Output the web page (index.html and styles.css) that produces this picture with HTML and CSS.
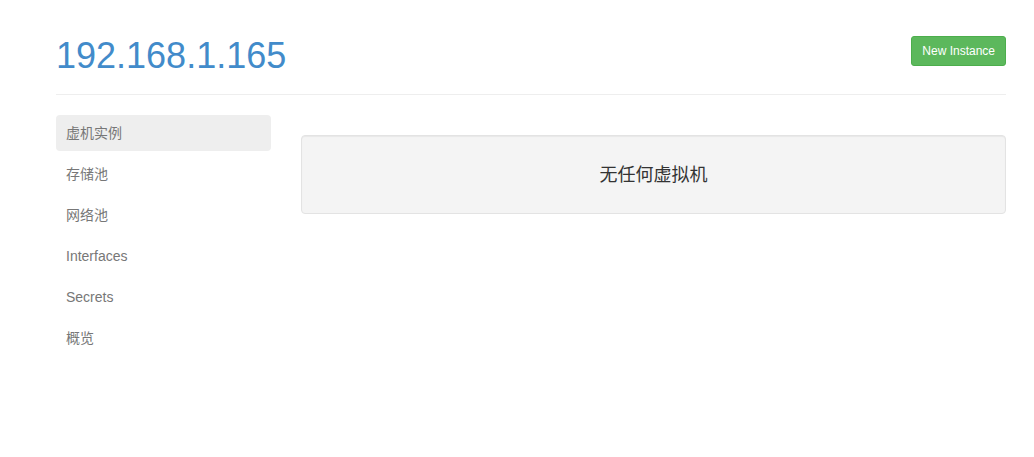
FILE: index.html
```html
<!DOCTYPE html>
<html lang="zh-CN">
<head>
<meta charset="utf-8">
<title>192.168.1.165</title>
<link rel="stylesheet" href="styles.css">
</head>
<body>
<div class="container">
  <div class="page-header">
    <h1 class="title">192.168.1.165</h1>
    <button class="btn-success">New Instance</button>
  </div>
  <div class="layout">
    <ul class="nav">
      <li class="nav-item active"><a href="#">虚机实例</a></li>
      <li class="nav-item"><a href="#">存储池</a></li>
      <li class="nav-item"><a href="#">网络池</a></li>
      <li class="nav-item"><a href="#">Interfaces</a></li>
      <li class="nav-item"><a href="#">Secrets</a></li>
      <li class="nav-item"><a href="#">概览</a></li>
    </ul>
    <div class="main">
      <div class="well">无任何虚拟机</div>
    </div>
  </div>
</div>
</body>
</html>
```

FILE: styles.css
```css
* { box-sizing: border-box; }
html, body { margin: 0; padding: 0; background: #fff; }
body {
  font-family: "Liberation Sans", Arial, "Noto Sans CJK SC", sans-serif;
  font-size: 14px;
  line-height: 20px;
  color: #333;
}
.container {
  padding: 0 28px 0 56px;
}
.page-header {
  display: flex;
  justify-content: space-between;
  align-items: flex-start;
  border-bottom: 1px solid #eee;
  padding-bottom: 18px;
}
.title {
  margin: 36px 0 0;
  font-size: 36px;
  line-height: 40px;
  font-weight: 500;
  color: #428bca;
}
.btn-success {
  margin-top: 36px;
  height: 30px;
  padding: 5px 10px;
  font-family: inherit;
  font-size: 12px;
  line-height: 18px;
  color: #fff;
  background: #5cb85c;
  border: 1px solid #4cae4c;
  border-radius: 3px;
  cursor: pointer;
}
.layout {
  display: grid;
  grid-template-columns: 215px 1fr;
  column-gap: 30px;
  margin-top: 20px;
}
.nav {
  list-style: none;
  margin: 0;
  padding: 0;
  display: flex;
  flex-direction: column;
  gap: 5px;
}
.nav-item a {
  display: block;
  height: 36px;
  padding: 8px 10px;
  line-height: 20px;
  color: #777;
  text-decoration: none;
  border-radius: 4px;
}
.nav-item.active a {
  background: #eee;
  color: #777;
}
.main {
  padding-top: 20px;
}
.well {
  height: 79px;
  display: flex;
  align-items: center;
  justify-content: center;
  background: #f4f4f4;
  border: 1px solid #e3e3e3;
  border-radius: 4px;
  box-shadow: inset 0 1px 1px rgba(0,0,0,0.05);
  font-size: 18px;
  color: #333;
}
```
